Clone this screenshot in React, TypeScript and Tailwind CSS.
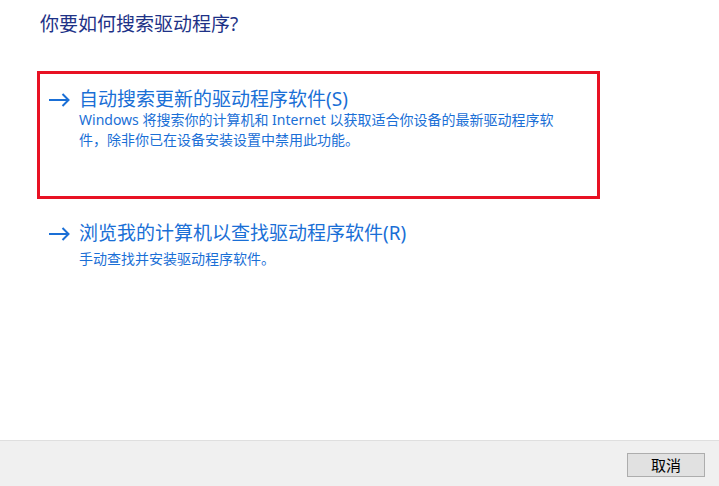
const ArrowIcon = () => (
  <svg width="21" height="14" viewBox="0 0 21 14" className="shrink-0">
    <path d="M0 7 H19.5 M13.5 1 L19.5 7 L13.5 13" fill="none" stroke="#1a6fd6" strokeWidth="2" />
  </svg>
);

export default function App() {
  return (
    <div className="w-[719px] h-[486px] bg-white flex flex-col font-['Noto_Sans','Noto_Sans_CJK_SC',sans-serif]">
      <div className="flex-1 pl-[37px]">
        <h1 className="pl-[3px] pt-[13px] text-[19px] leading-[22px] text-[#1e3287]">你要如何搜索驱动程序?</h1>

        <div className="mt-[36px] w-[563px] h-[128px] border-[3px] border-[#e81123] pl-[9px] pt-[15px]">
          <div className="flex items-center gap-[9px] h-[21px]">
            <ArrowIcon />
            <span className="text-[19px] leading-[21px] text-[#1a6fd6] whitespace-nowrap">自动搜索更新的驱动程序软件(S)</span>
          </div>
          <div className="pl-[30px] text-[14px] leading-[20px] text-[#1a6fd6] whitespace-nowrap">
            <div>Windows 将搜索你的计算机和 Internet 以获取适合你设备的最新驱动程序软</div>
            <div>件，除非你已在设备安装设置中禁用此功能。</div>
          </div>
        </div>

        <div className="mt-[24px] pl-[12px]">
          <div className="flex items-center gap-[9px] h-[21px]">
            <ArrowIcon />
            <span className="text-[19px] leading-[21px] text-[#1a6fd6] whitespace-nowrap">浏览我的计算机以查找驱动程序软件(R)</span>
          </div>
          <div className="mt-[5px] pl-[30px] text-[14px] leading-[20px] text-[#1a6fd6] whitespace-nowrap">手动查找并安装驱动程序软件。</div>
        </div>
      </div>

      <div className="h-[46px] bg-[#f0f0f0] border-t border-[#dfdfdf] flex justify-end pt-[12px] pr-[14px]">
        <button className="w-[78px] h-[24px] bg-[#e1e1e1] border border-[#adadad] text-[15px] leading-[20px] text-black">取消</button>
      </div>
    </div>
  );
}
